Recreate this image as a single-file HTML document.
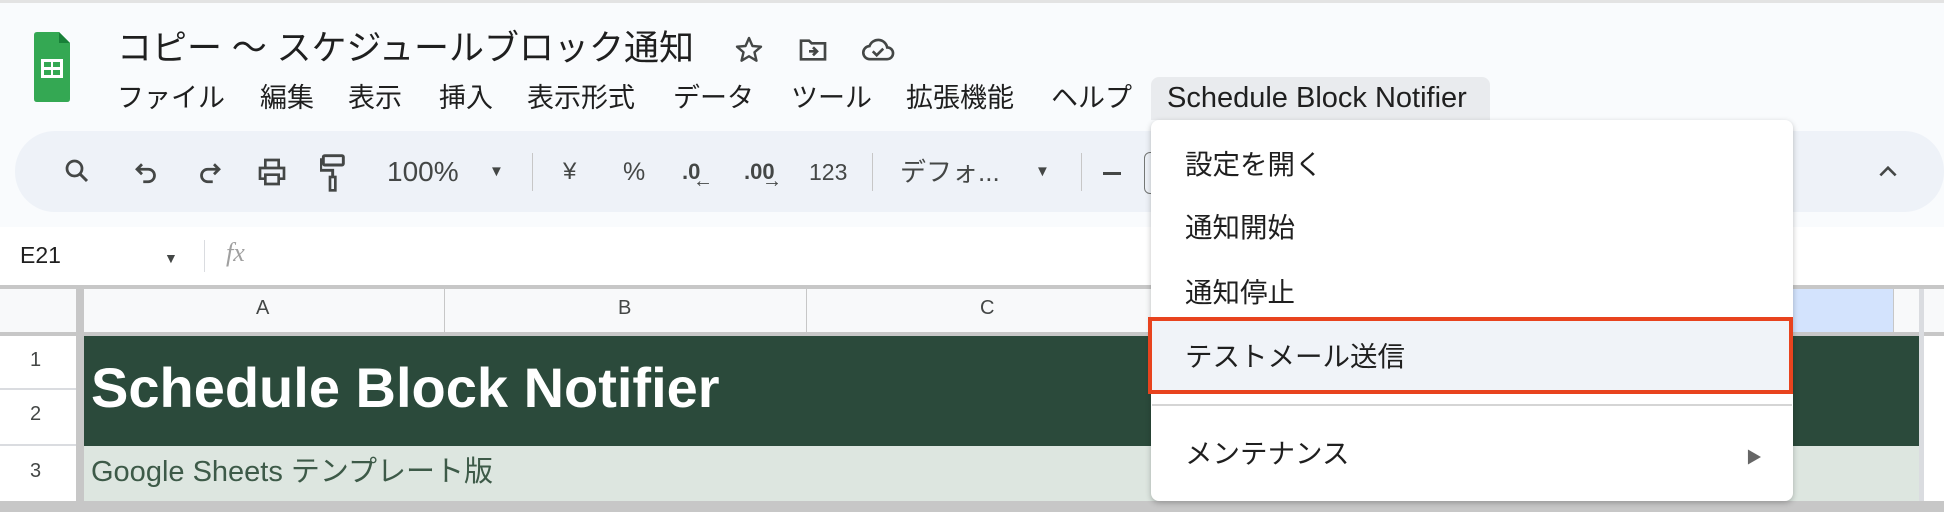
<!DOCTYPE html>
<html><head><meta charset="utf-8"><style>
*{margin:0;padding:0;box-sizing:border-box}
body{width:1944px;height:512px;overflow:hidden;background:#fff;font-family:"Liberation Sans","Noto Sans CJK JP",sans-serif;color:#1f1f1f;position:relative}
.a{position:absolute;white-space:nowrap}
.mi{position:absolute;top:80px;font-size:27px;line-height:36px}
.tb{position:absolute;top:156px;font-size:22px;color:#444746;line-height:32px}
.dd{position:absolute;left:1185px;font-size:27.5px;line-height:34px;color:#1f1f1f}
</style></head><body>
<div class="a" style="left:0;top:0;width:1944px;height:227px;background:#f9fbfd"></div>
<div class="a" style="left:0;top:0;width:1944px;height:3px;background:#e3e3e3"></div>
<svg class="a" style="left:34px;top:32px" width="36" height="70" viewBox="0 0 36 70"><path d="M3 0H25L36 11V67Q36 70 33 70H3Q0 70 0 67V3Q0 0 3 0Z" fill="#34a853"/><path d="M25 0V11H36Z" fill="#188038"/><rect x="7" y="27" width="22" height="19" fill="#fff"/><rect x="10" y="30" width="7" height="5" fill="#34a853"/><rect x="19" y="30" width="7" height="5" fill="#34a853"/><rect x="10" y="38" width="7" height="5" fill="#34a853"/><rect x="19" y="38" width="7" height="5" fill="#34a853"/></svg>
<div class="a" style="left:117px;top:27px;font-size:35px;line-height:44px">コピー 〜 スケジュールブロック通知</div>
<svg class="a" style="left:733px;top:34px" width="32" height="32" viewBox="0 0 24 24"><path d="M12 3l2.6 6 6.4.5-4.9 4.2 1.5 6.3L12 16.7 6.4 20l1.5-6.3L3 9.5l6.4-.5z" fill="none" stroke="#444746" stroke-width="1.8" stroke-linejoin="round"/></svg>
<svg class="a" style="left:797px;top:34px" width="32" height="32" viewBox="0 0 24 24"><path d="M3 5h6l2 2h10v12H3z" fill="none" stroke="#444746" stroke-width="2"/><path d="M9 13h6M12 10l3 3-3 3" fill="none" stroke="#444746" stroke-width="2"/></svg>
<svg class="a" style="left:861px;top:34px" width="34" height="32" viewBox="0 0 26 24"><path d="M7 19a5 5 0 0 1-.5-10A7 7 0 0 1 20 10a4.5 4.5 0 0 1 0 9z" fill="none" stroke="#444746" stroke-width="2"/><path d="M9 13l3 3 5-5" fill="none" stroke="#444746" stroke-width="2"/></svg>
<div class="mi" style="left:117px">ファイル</div>
<div class="mi" style="left:260px">編集</div>
<div class="mi" style="left:348px">表示</div>
<div class="mi" style="left:439px">挿入</div>
<div class="mi" style="left:527px">表示形式</div>
<div class="mi" style="left:673px">データ</div>
<div class="mi" style="left:791px">ツール</div>
<div class="mi" style="left:906px">拡張機能</div>
<div class="mi" style="left:1051px">ヘルプ</div>
<div class="a" style="left:1151px;top:77px;width:339px;height:43px;background:#e9ebee;border-radius:8px 8px 0 0"></div>
<div class="mi" style="left:1167px;font-size:29px">Schedule Block Notifier</div>
<div class="a" style="left:15px;top:131px;width:1929px;height:81px;background:#eef2f8;border-radius:40px"></div>
<svg class="a" style="left:62px;top:156px" width="30" height="30" viewBox="0 0 24 24"><circle cx="10" cy="10" r="6" fill="none" stroke="#444746" stroke-width="2.2"/><path d="M14.5 14.5L20 20" stroke="#444746" stroke-width="2.4"/></svg>
<svg class="a" style="left:132px;top:158px" width="30" height="30" viewBox="0 0 24 24"><path d="M8 5L4 9l4 4M4 9h9a5 5 0 0 1 0 10H9" fill="none" stroke="#444746" stroke-width="2.2"/></svg>
<svg class="a" style="left:194px;top:158px" width="30" height="30" viewBox="0 0 24 24"><path d="M16 5l4 4-4 4M20 9h-9a5 5 0 0 0 0 10h4" fill="none" stroke="#444746" stroke-width="2.2"/></svg>
<svg class="a" style="left:256px;top:156px" width="32" height="32" viewBox="0 0 24 24"><path d="M7 8V3h10v5M7 17H3V9h18v8h-4M7 14h10v7H7z" fill="none" stroke="#444746" stroke-width="2"/></svg>
<svg class="a" style="left:320px;top:153px" width="28" height="40" viewBox="0 0 20 30"><rect x="2" y="2" width="15" height="7" rx="1" fill="none" stroke="#444746" stroke-width="2.2"/><path d="M2 5H0v8h9v5" fill="none" stroke="#444746" stroke-width="2.2"/><rect x="7" y="18" width="4" height="10" fill="none" stroke="#444746" stroke-width="2"/></svg>
<div class="tb" style="left:387px;font-size:28px">100%</div>
<div class="tb" style="left:489px;font-size:15px">▼</div>
<div class="a" style="left:532px;top:153px;width:1px;height:38px;background:#c7c7c7"></div>
<div class="tb" style="left:563px;font-size:24px">¥</div>
<div class="tb" style="left:623px;font-size:25px">%</div>
<div class="tb" style="left:682px;font-size:22px;font-weight:bold">.0</div><div class="a" style="left:693px;top:170px;font-size:20px;color:#444746">←</div>
<div class="tb" style="left:744px;font-size:22px;font-weight:bold">.00</div><div class="a" style="left:762px;top:170px;font-size:20px;color:#444746">→</div>
<div class="tb" style="left:809px;font-size:23px">123</div>
<div class="a" style="left:872px;top:153px;width:1px;height:38px;background:#c7c7c7"></div>
<div class="tb" style="left:900px;font-size:26px">デフォ...</div>
<div class="tb" style="left:1035px;font-size:15px">▼</div>
<div class="a" style="left:1081px;top:153px;width:1px;height:38px;background:#c7c7c7"></div>
<div class="a" style="left:1103px;top:172px;width:18px;height:3px;background:#444746"></div>
<div class="a" style="left:1144px;top:152px;width:20px;height:42px;border:1.5px solid #747775;border-radius:6px"></div>
<svg class="a" style="left:1876px;top:162px" width="24" height="18" viewBox="0 0 22 16"><path d="M4 12l7-7 7 7" fill="none" stroke="#444746" stroke-width="2.4"/></svg>
<div class="a" style="left:20px;top:242px;font-size:23px">E21</div>
<div class="a" style="left:164px;top:250px;font-size:14px;color:#444746">▼</div>
<div class="a" style="left:204px;top:240px;width:1px;height:32px;background:#dadce0"></div>
<div class="a" style="left:226px;top:238px;font-size:26px;color:#a0a0a0;font-style:italic;font-family:'Liberation Serif',serif">fx</div>
<div class="a" style="left:0;top:285px;width:1944px;height:4px;background:#c7c7c7"></div>
<div class="a" style="left:0;top:289px;width:1944px;height:43px;background:#f8f9fa"></div>
<div class="a" style="left:76px;top:289px;width:8px;height:212px;background:#c7c7c7"></div>
<div class="a" style="left:0;top:332px;width:1944px;height:4px;background:#c7c7c7"></div>
<div class="a" style="left:444px;top:289px;width:1px;height:43px;background:#c7c7c7"></div>
<div class="a" style="left:806px;top:289px;width:1px;height:43px;background:#c7c7c7"></div>
<div class="a" style="left:1793px;top:289px;width:100px;height:43px;background:#d3e3fd"></div>
<div class="a" style="left:1893px;top:289px;width:1px;height:43px;background:#c7c7c7"></div>
<div class="a" style="left:1919px;top:289px;width:5px;height:223px;background:#dadce0"></div>
<div class="a" style="left:256px;top:297px;font-size:20px;color:#444746">A</div>
<div class="a" style="left:618px;top:297px;font-size:20px;color:#444746">B</div>
<div class="a" style="left:980px;top:297px;font-size:20px;color:#444746">C</div>
<div class="a" style="left:84px;top:336px;width:1835px;height:110px;background:#2b4a3b"></div>
<div class="a" style="left:84px;top:446px;width:1835px;height:55px;background:#dde6e0"></div>
<div class="a" style="left:0;top:388px;width:76px;height:2px;background:#dadce0"></div>
<div class="a" style="left:0;top:444px;width:76px;height:2px;background:#dadce0"></div>
<div class="a" style="left:30px;top:349px;font-size:20px;color:#444746">1</div>
<div class="a" style="left:30px;top:403px;font-size:20px;color:#444746">2</div>
<div class="a" style="left:30px;top:460px;font-size:20px;color:#444746">3</div>
<div class="a" style="left:91px;top:356px;font-size:56px;font-weight:bold;color:#fff;line-height:64px">Schedule Block Notifier</div>
<div class="a" style="left:91px;top:454px;font-size:29px;color:#3d5a48;line-height:36px">Google Sheets テンプレート版</div>
<div class="a" style="left:0;top:501px;width:1944px;height:11px;background:#c7c7c7"></div>
<div class="a" style="left:1151px;top:120px;width:642px;height:381px;background:#fff;border-radius:8px;box-shadow:0 2px 6px rgba(0,0,0,.25)"></div>
<div class="dd" style="top:148px">設定を開く</div>
<div class="dd" style="top:211px">通知開始</div>
<div class="dd" style="top:276px">通知停止</div>
<div class="a" style="left:1148px;top:317px;width:645px;height:77px;background:#f0f3f8;border:4px solid #e8431e"></div>
<div class="dd" style="top:340px">テストメール送信</div>
<div class="a" style="left:1152px;top:404px;width:640px;height:2px;background:#d5d5d5"></div>
<div class="dd" style="top:437px">メンテナンス</div>
<div class="a" style="left:1746px;top:444px;font-size:16px;color:#666">▶</div>
</body></html>
